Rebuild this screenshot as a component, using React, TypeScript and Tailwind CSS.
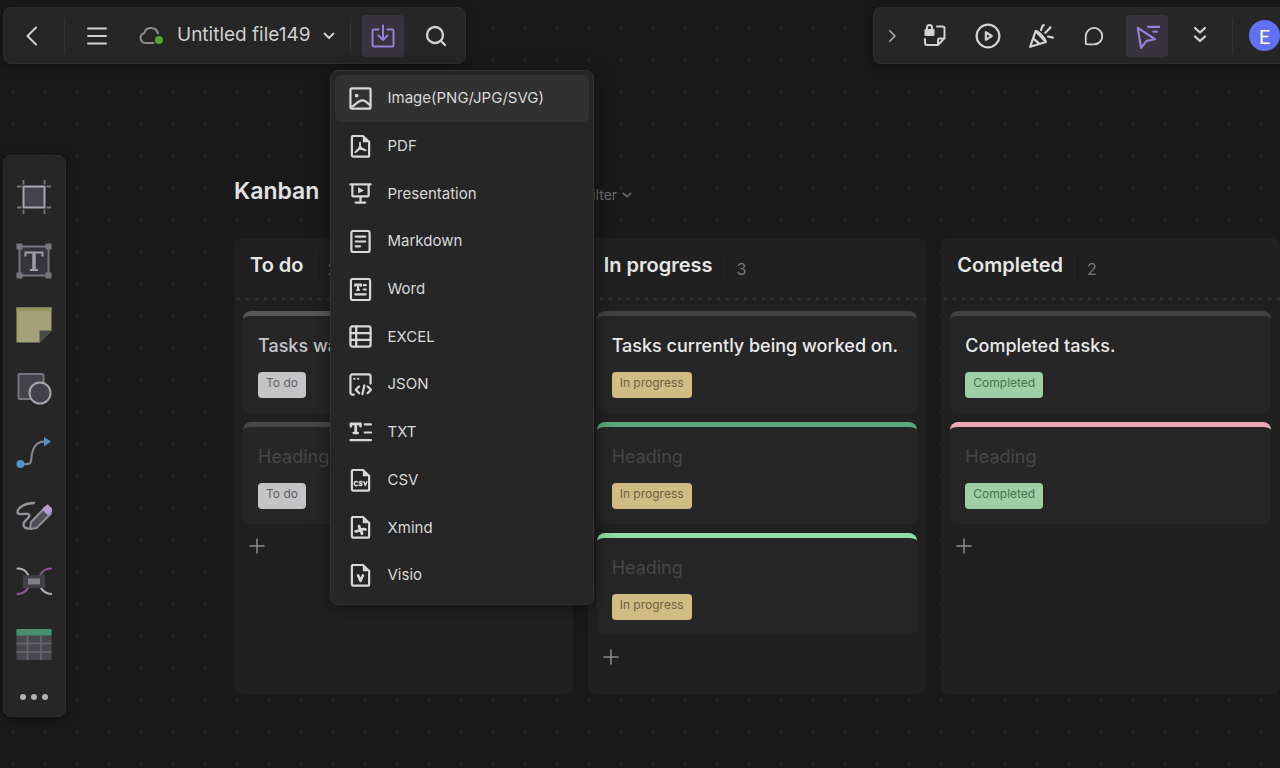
import React from "react";

type IconProps = { children: React.ReactNode; className?: string; box?: string; weight?: number };

function Icon({ children, className = "size-6", box = "0 0 24 24", weight = 2 }: IconProps) {
  return (
    <svg
      viewBox={box}
      className={`shrink-0 ${className}`}
      fill="none"
      stroke="currentColor"
      strokeWidth={weight}
      strokeLinecap="round"
      strokeLinejoin="round"
      aria-hidden="true"
    >
      {children}
    </svg>
  );
}

const foldedPage = (
  <>
    <path d="M4.5 1h10L21 7v14a1.5 1.5 0 0 1-1.500 1.500h-15A1.500 1.500 0 0 1 3 21V2.500A1.500 1.500 0 0 1 4.500 1Z" />
    <path d="M14.500 1v6.500H21Z" fill="currentColor" stroke="none" />
  </>
);

const exportFormats: { label: string; icon: React.ReactNode }[] = [
  {
    label: "Image(PNG/JPG/SVG)",
    icon: (
      <>
        <rect x="1.500" y="1.500" width="21" height="21" rx="1.500" />
        <circle cx="8" cy="9" r="1.900" fill="currentColor" stroke="none" />
        <path d="M3 20.500c4-1.500 6-6.500 11-6.500 3 0 5.500 2.500 8 5" />
      </>
    ),
  },
  {
    label: "PDF",
    icon: (
      <>
        {foldedPage}
        <path d="M11.500 8v3.500c-.5 2.500-2.500 5-5 6.500M11.500 11.500c1.200 2.500 3 4 6 4.500M8.500 15.500c2.500-1 4.500-1.200 7-.8" strokeWidth="1.800" />
      </>
    ),
  },
  {
    label: "Presentation",
    icon: (
      <>
        <path d="M1.500 2.500h21M3.500 2.500V14a1 1 0 0 0 1 1h15a1 1 0 0 0 1-1V2.500M12 15v6M7 21.500h10" />
        <path d="M9.500 5.500v6.500l6-3.250Z" fill="currentColor" stroke="none" />
      </>
    ),
  },
  {
    label: "Markdown",
    icon: (
      <>
        <rect x="2.500" y="1" width="19" height="22" rx="1.800" />
        <path d="M7 7h10M7 12h10M7 17h4.500" />
      </>
    ),
  },
  {
    label: "Word",
    icon: (
      <>
        <rect x="2" y="1" width="20" height="22" rx="1.800" />
        <path d="M6.500 8V7h6v1M9.500 7v5M8.500 12.500h2M15.500 7.500h2M15.500 12h2M6.500 17h11" />
      </>
    ),
  },
  {
    label: "EXCEL",
    icon: (
      <>
        <rect x="1.500" y="1.500" width="21" height="21" rx="2" />
        <path d="M7.500 1.500v21M1.500 8.500h21M1.500 15.500h21" />
      </>
    ),
  },
  {
    label: "JSON",
    icon: (
      <>
        <path d="M5 22.500H3.500a2 2 0 0 1-2-2v-17a2 2 0 0 1 2-2h17a2 2 0 0 1 2 2V11" />
        <path d="M5.500 6h.2M9.500 6h.2" />
        <path d="m10.500 14-3.500 3.500 3.500 3.500M19.500 14l3.500 3.500-3.500 3.500M16 13l-2 9" />
      </>
    ),
  },
  {
    label: "TXT",
    icon: (
      <>
        <path d="M2 5.500V3h10v2.500M7 3v9.500M5 12.500h4" strokeWidth="2.800" />
        <path d="M16.500 3.500H23M16.500 12H23M1.500 20h21.500" />
      </>
    ),
  },
  {
    label: "CSV",
    icon: (
      <>
        {foldedPage}
        <path
          d="M8.700 13.400c-1.500-.9-3.200 0-3.200 1.800s1.700 2.700 3.200 1.800M13.500 13.500c-1-.8-2.600-.5-2.600.5 0 1.400 2.600.9 2.600 2.300 0 1.100-1.800 1.300-2.800.5M15.500 13.300l1.500 3.800 1.500-3.800"
          strokeWidth="1.600"
        />
      </>
    ),
  },
  {
    label: "Xmind",
    icon: (
      <>
        {foldedPage}
        <path d="M10.500 10.500c0 3 3 5 3 8M7 16c3 .5 6-3.500 10-2" strokeWidth="3" />
      </>
    ),
  },
  {
    label: "Visio",
    icon: (
      <>
        {foldedPage}
        <path d="m9.500 12 2.500 5.500 2.500-5.500" strokeWidth="2.800" />
      </>
    ),
  },
];

function IconButton({ label, active = false, children }: { label: string; active?: boolean; children: React.ReactNode }) {
  return (
    <button
      type="button"
      aria-label={label}
      aria-pressed={active}
      className={`flex size-[42px] shrink-0 items-center justify-center rounded ${active ? "bg-[#37343f] text-[#9580d4]" : "text-[#d2d2d2]"}`}
    >
      {children}
    </button>
  );
}

function BarDivider() {
  return <span className="h-9 w-px shrink-0 bg-[#333333]" />;
}

function ExportMenu() {
  return (
    <ul
      role="menu"
      className="absolute top-[55px] -left-8 z-20 grid h-[535px] w-[264px] auto-rows-fr rounded-lg border border-[#323232] bg-[#262626] p-1 shadow-[0_4px_20px_rgba(0,0,0,0.4)]"
    >
      {exportFormats.map((format, i) => (
        <li key={format.label} role="none" className="flex">
          <button
            type="button"
            role="menuitem"
            className={`flex flex-1 items-center gap-4 rounded-md pl-[14px] text-left text-[15px] text-[#d8d8d8] ${i === 0 ? "bg-[#313131]" : ""}`}
          >
            <Icon className="size-[23px]" weight={2.3}>{format.icon}</Icon>
            {format.label}
          </button>
        </li>
      ))}
    </ul>
  );
}

function TopBar() {
  return (
    <header className="relative z-10 flex items-start justify-between pt-[7px] pl-[3px]">
      <div className="flex h-[57px] items-center gap-[11px] rounded-lg border border-[#2e2e2e] bg-[#262626] pr-2 pl-[7px] shadow-[0_2px_10px_rgba(0,0,0,0.35)]">
        <IconButton label="Back">
          <Icon className="size-6"><path d="M16 3.500 7.500 12l8.500 8.500" /></Icon>
        </IconButton>
        <BarDivider />
        <IconButton label="Menu">
          <Icon className="size-6"><path d="M3 4.500h18M3 12h18M3 19.500h18" /></Icon>
        </IconButton>
        <button type="button" className="flex h-[42px] items-center gap-3 pr-1 pl-[10px] text-[19px] text-[#cfcfcf]">
          <Icon className="h-6 w-[26px] text-[#8c8c8c]" box="0 0 26 24">
            <path d="M14.500 19H6.500a5 5 0 0 1-1.300-9.800C6 6 8.800 4 12 4c3.600 0 6.300 2.400 7 5.500" />
            <circle cx="20" cy="16" r="4" fill="#55a630" stroke="none" />
          </Icon>
          <span>Untitled file149</span>
          <Icon className="size-3"><path d="m3 7 9 9 9-9" strokeWidth="3.800" /></Icon>
        </button>
        <BarDivider />
        <div className="relative">
          <IconButton label="Export" active>
            <Icon className="size-6">
              <path d="M7.500 5.500H3A1.500 1.500 0 0 0 1.500 7v14A1.500 1.500 0 0 0 3 22.500h18a1.500 1.500 0 0 0 1.500-1.500V7A1.500 1.500 0 0 0 21 5.500h-4.500M12 1.500v14M7.500 11.500l4.500 4.500 4.500-4.500" />
            </Icon>
          </IconButton>
          <ExportMenu />
        </div>
        <IconButton label="Search">
          <Icon className="size-6" weight={2.3}><circle cx="11" cy="11" r="8" /><path d="m17 17 4 4" /></Icon>
        </IconButton>
      </div>

      <div className="flex h-[57px] items-center gap-[11px] rounded-l-lg border border-r-0 border-[#2e2e2e] bg-[#262626] pl-[7px] shadow-[0_2px_10px_rgba(0,0,0,0.35)]">
        <button type="button" aria-label="Collapse" className="flex h-[42px] w-[22px] items-center justify-center text-[#a8a8a8]">
          <Icon className="size-[14px]"><path d="m8 3 9 9-9 9" strokeWidth="3" /></Icon>
        </button>
        <IconButton label="Locked note">
          <Icon className="size-6">
            <path d="M14 2.500h5.500a2 2 0 0 1 2 2V14l-6.500 7H4a2 2 0 0 1-2-2v-4M15 21v-5a1.500 1.500 0 0 1 1.500-1.500h5" />
            <rect x="1.500" y="5" width="10" height="7" rx="1" fill="currentColor" stroke="none" />
            <path d="M4 5V3.500a2.500 2.500 0 0 1 5 0V5" />
          </Icon>
        </IconButton>
        <IconButton label="Play">
          <Icon className="size-[26px]"><circle cx="12" cy="12" r="10.500" /><path d="M10 8.500v7l5.500-3.500Z" /></Icon>
        </IconButton>
        <IconButton label="Celebrate">
          <Icon className="size-[26px]">
            <path d="M7 7.500 2 22l14.500-4.500ZM7 7.500c2-1 9.500 7.500 9.500 10M5 14.500l5.500 4.500M12 6.500l1.500-4M16 9l4.500-4.500M18.500 12.500l4.500 1M14.500 2v.2M20.500 4h.2" />
          </Icon>
        </IconButton>
        <IconButton label="Comments">
          <Icon className="size-[22px]"><path d="M12 3.200a9 9 0 1 1 0 18H4.500a1.500 1.500 0 0 1-1.500-1.500V12a9 9 0 0 1 9-8.800Z" /></Icon>
        </IconButton>
        <IconButton label="Pointer labels" active>
          <Icon className="size-[26px]"><path d="M3.500 4.500 6.500 23l5-6.500 8-1.500ZM13 3.500h10.500M18 8h3" /></Icon>
        </IconButton>
        <IconButton label="More">
          <Icon className="size-6" weight={2.3}><path d="m7 4 5 4.500L17 4M7 12.500l5 4.500 5-4.500" /></Icon>
        </IconButton>
        <BarDivider />
        <button type="button" aria-label="Account" className="ml-[5px] flex size-[31px] items-center justify-center rounded-full bg-[#6171f3] font-['Lato',sans-serif] text-xl text-white">
          E
        </button>
      </div>
    </header>
  );
}

const tools: { label: string; drawing: React.ReactNode }[] = [
  {
    label: "Frame",
    drawing: (
      <>
        <path d="M7.500 1v34M28.500 1v34M1 7.500h34M1 28.500h34" stroke="#77757d" strokeWidth="1.800" strokeDasharray="4.500 25" strokeLinecap="butt" />
        <rect x="7.500" y="7.500" width="21" height="21" fill="#44424a" stroke="#a7a5ad" />
      </>
    ),
  },
  {
    label: "Text",
    drawing: (
      <>
        <rect x="3.500" y="3.500" width="29" height="29" fill="#36353c" stroke="#77757d" />
        <path d="M.5.500h6v6h-6ZM29.500.500h6v6h-6ZM.5 29.500h6v6h-6ZM29.500 29.500h6v6h-6Z" fill="#77757d" stroke="none" />
        <path d="M9.500 13.500V9.500h17v4M14 27h8" stroke="#a09ea6" strokeWidth="2" strokeLinecap="butt" />
        <path d="M18 9.500v17" stroke="#a09ea6" strokeWidth="3.400" strokeLinecap="butt" />
      </>
    ),
  },
  {
    label: "Sticky note",
    drawing: (
      <>
        <path d="M.5.500h35v23l-12 12H.500Z" fill="#a4a078" stroke="none" />
        <path d="M.5.500h35V4H.500Z" fill="#96935f" stroke="none" />
        <path d="M23.500 23.500h12l-12 12Z" fill="#4a4a4a" stroke="none" />
      </>
    ),
  },
  {
    label: "Shapes",
    drawing: (
      <>
        <rect x="2.500" y="3" width="25" height="25" rx="1" fill="#44424a" stroke="#77757d" />
        <circle cx="24" cy="22" r="10.500" fill="#44424a" stroke="#a7a5ad" />
      </>
    ),
  },
  {
    label: "Connector",
    drawing: (
      <>
        <path d="M4 29c16 2 9-4 13-14 2-5 5-9 12-8.500" stroke="#8b898f" />
        <circle cx="4.500" cy="29" r="4" fill="#5591c8" stroke="none" />
        <path d="M28 2v9.500l7-5Z" fill="#5591c8" stroke="none" />
      </>
    ),
  },
  {
    label: "Pen",
    drawing: (
      <>
        <path d="M18 4C9 4 1 9 1.500 13.500c.5 4 12-1 12 3C13 20 7 22 7.500 26c.5 3 4 4 8 3.500" stroke="#96949b" strokeWidth="2.300" />
        <path d="m15 23 14-14.500 6 6L20.500 29l-6.500 1Z" fill="#504e56" stroke="#918f97" />
        <path d="m27.500 10.500 4-4 4.500 4.500-4 4Z" fill="#b79bd1" stroke="#b79bd1" />
      </>
    ),
  },
  {
    label: "Mind map",
    drawing: (
      <>
        <path d="M1.500 5.500c6-.5 9 3 11 7M24.500 24c2 4 5 7 11 7" stroke="#b1afb5" />
        <path d="M35 5.500c-6 0-9 3-11 7M1.500 31c6 0 9-3 11-7" stroke="#90559b" />
        <rect x="7" y="12" width="22" height="13" rx="1" fill="#414046" stroke="none" />
        <rect x="12" y="15.500" width="12" height="6" fill="#817f85" stroke="none" />
      </>
    ),
  },
  {
    label: "Table",
    drawing: (
      <>
        <rect x=".5" y="2" width="35" height="31" rx="1" fill="#49484e" stroke="none" />
        <path d="M.5 8.500h35V3a1 1 0 0 0-1-1h-33a1 1 0 0 0-1 1Z" fill="#47906d" stroke="none" />
        <path d="M11.500 9v24M25 9v24M.500 16.500h35M.500 25h35" stroke="#6b6970" strokeWidth="1.500" strokeLinecap="butt" />
      </>
    ),
  },
];

function ToolRail() {
  return (
    <nav aria-label="Tools" className="relative z-10 flex w-[63px] shrink-0 flex-col items-center rounded-lg border border-[#2e2e2e] bg-[#262626] pt-[9px] shadow-[0_2px_10px_rgba(0,0,0,0.35)]">
      {tools.map((tool) => (
        <button key={tool.label} type="button" aria-label={tool.label} className="flex h-16 w-full items-center justify-center pr-[2px]">
          <Icon className="size-9" box="0 0 36 36">{tool.drawing}</Icon>
        </button>
      ))}
      <button type="button" aria-label="More tools" className="flex h-[39px] w-full items-center justify-center gap-[5px] pr-[2px] text-[#b2b2b2]">
        <span className="size-[6px] rounded-full bg-current" />
        <span className="size-[6px] rounded-full bg-current" />
        <span className="size-[6px] rounded-full bg-current" />
      </button>
    </nav>
  );
}

type Card = { title: string; bar: string; text: string };
type Column = { name: string; tag: string; cards: Card[] };

const filled = "font-medium text-[#eaeaea]";
const empty = "text-[#464646]";

const columns: Column[] = [
  {
    name: "To do",
    tag: "bg-[#c4c4c6] text-[#5f5f61]",
    cards: [
      { title: "Tasks waiting.", bar: "border-t-[#585858]", text: "font-medium text-[#c6c6c6]" },
      { title: "Heading", bar: "border-t-[#484848]", text: empty },
    ],
  },
  {
    name: "In progress",
    tag: "bg-[#d1bc84] text-[#6e603b]",
    cards: [
      { title: "Tasks currently being worked on.", bar: "border-t-[#424242]", text: filled },
      { title: "Heading", bar: "border-t-[#55a97c]", text: empty },
      { title: "Heading", bar: "border-t-[#92dda5]", text: empty },
    ],
  },
  {
    name: "Completed",
    tag: "bg-[#9fcfa6] text-[#477350]",
    cards: [
      { title: "Completed tasks.", bar: "border-t-[#424242]", text: filled },
      { title: "Heading", bar: "border-t-[#f0a8b6]", text: empty },
    ],
  },
];

function KanbanColumn({ column }: { column: Column }) {
  return (
    <section className="flex min-h-[456px] min-w-0 flex-col rounded-lg bg-[#202020]">
      <div className="flex h-[54px] items-center pl-4">
        <h2 className="text-xl font-semibold text-[#e6e6e6]">{column.name}</h2>
        <span className="mt-1 ml-[11px] h-7 w-px bg-[#272727]" />
        <span className="mt-2 ml-3 text-base text-[#777777]">{column.cards.length}</span>
      </div>
      <div className="mt-[5px] h-1 bg-[radial-gradient(circle,#2e2e2e_1px,transparent_2px)] bg-size-[9px_4px]" />
      <div className="mt-[10px] flex flex-col gap-[9px] px-[9px]">
        {column.cards.map((card, i) => (
          <article
            key={i}
            className={`flex h-[102px] flex-col items-start rounded-lg border-t-[5px] bg-[#262626] pl-[15px] ${card.bar}`}
          >
            <h3 className={`mt-[15px] text-lg leading-[30px] whitespace-nowrap ${card.text}`}>{card.title}</h3>
            <span className={`mt-[11px] h-[26px] rounded px-2 text-xs leading-[22px] ${column.tag}`}>{column.name}</span>
          </article>
        ))}
      </div>
      <button type="button" aria-label={`Add card to ${column.name}`} className="mt-[13px] ml-[14px] flex size-[18px] items-center justify-center text-[#8a8a8a]">
        <Icon className="size-[18px]" box="0 0 18 18"><path d="M9 2v14M2 9h14" strokeWidth="1.500" /></Icon>
      </button>
    </section>
  );
}

function Board() {
  return (
    <div className="ml-[168px] min-w-0 flex-1">
      <div className="mb-[11px] flex h-[72px] items-center">
        <h1 className="w-[350px] text-[23px] font-semibold text-[#e2e2e2]">Kanban</h1>
        <button type="button" className="mt-2 flex items-center gap-[5px] text-sm text-[#6c6c6c]">
          Filter
          <Icon className="size-[10px]"><path d="m3 8 9 8 9-8" strokeWidth="4" /></Icon>
        </button>
      </div>
      <div className="grid grid-cols-3 gap-[15px]">
        {columns.map((column) => (
          <KanbanColumn key={column.name} column={column} />
        ))}
      </div>
    </div>
  );
}

export default function App() {
  return (
    <div className="min-h-screen overflow-hidden bg-[#191919] bg-[radial-gradient(circle,#232323_1px,transparent_2px)] bg-size-[32px_32px] bg-position-[-3px_12px] font-['Inter','Liberation_Sans',sans-serif]">
      <TopBar />
      <main className="mt-[91px] flex items-start pl-[3px]">
        <ToolRail />
        <Board />
      </main>
    </div>
  );
}
